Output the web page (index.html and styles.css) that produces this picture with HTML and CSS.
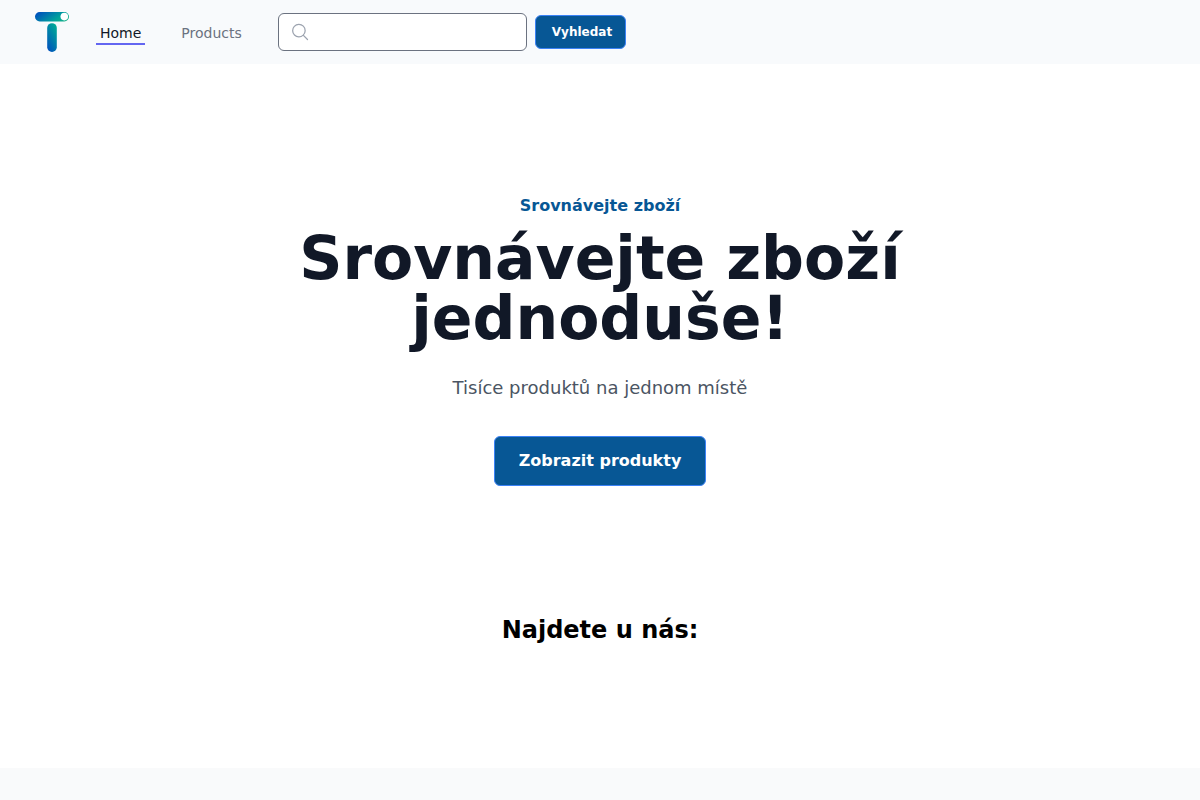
FILE: index.html
```
<!DOCTYPE html>
<html lang="cs">
<head>
<meta charset="utf-8">
<meta name="viewport" content="width=device-width, initial-scale=1">
<title>Srovnávejte zboží</title>
<link rel="stylesheet" href="styles.css">
</head>
<body>

<header class="navbar">
  <a href="#" class="logo" aria-label="Home">
    <svg width="40" height="40" viewBox="0 0 40 40">
      <defs>
        <linearGradient id="bar" x1="0" y1="0.3" x2="1" y2="0.7">
          <stop offset="0" stop-color="#0052bd"/>
          <stop offset="0.7" stop-color="#00a39b"/>
          <stop offset="1" stop-color="#16b08a"/>
        </linearGradient>
        <linearGradient id="stem" x1="0.8" y1="0" x2="0.2" y2="1">
          <stop offset="0" stop-color="#00ab95"/>
          <stop offset="1" stop-color="#0052bd"/>
        </linearGradient>
      </defs>
      <rect x="3" y="0" width="34" height="9.4" rx="4.7" fill="url(#bar)"/>
      <circle cx="32.3" cy="4.6" r="3.8" fill="#fff"/>
      <rect x="15.2" y="11.2" width="9.6" height="28.8" rx="4.8" fill="url(#stem)"/>
    </svg>
  </a>
  <nav class="links">
    <a href="#" class="link active">Home</a>
    <a href="#" class="link">Products</a>
  </nav>
  <form class="search">
    <div class="search-box">
      <svg class="search-icon" width="20" height="20" viewBox="0 0 24 24" fill="none" stroke="#9ca3af" stroke-width="1.5" stroke-linecap="round" stroke-linejoin="round">
        <path d="M21 21l-5.2-5.2m0 0A7.5 7.5 0 1 0 5.2 5.2a7.5 7.5 0 0 0 10.6 10.6z"/>
      </svg>
      <input type="search" name="q" class="search-input" aria-label="Vyhledat">
    </div>
    <button type="submit" class="btn btn-small">Vyhledat</button>
  </form>
</header>

<main>
  <section class="hero">
    <p class="eyebrow">Srovnávejte zboží</p>
    <h1 class="title">Srovnávejte zboží jednoduše!</h1>
    <p class="lead">Tisíce produktů na jednom místě</p>
    <button type="button" class="btn btn-large">Zobrazit produkty</button>
  </section>

  <section class="categories">
    <h2 class="subtitle">Najdete u nás:</h2>
  </section>
</main>

</body>
</html>
```

FILE: styles.css
```
* {
  box-sizing: border-box;
}

body {
  margin: 0;
  background: #f9fafb;
  color: #000;
  font-family: "DejaVu Sans", sans-serif;
  font-size: 16px;
  line-height: 24px;
}

h1, h2, p {
  margin: 0;
}

.navbar {
  display: flex;
  align-items: center;
  height: 64px;
  padding: 0 32px;
  background: #f8fafc;
}

.logo {
  display: flex;
}

.links {
  display: flex;
  gap: 32px;
  margin-left: 24px;
}

.link {
  padding: 4px 4px 0;
  border-bottom: 2px solid transparent;
  color: #6b7280;
  font-size: 14px;
  line-height: 20px;
  text-decoration: none;
}

.active {
  border-color: #6366f1;
  color: #111827;
}

.search {
  display: flex;
  align-items: center;
  gap: 8px;
  margin-left: 32px;
}

.search-box {
  position: relative;
}

.search-icon {
  position: absolute;
  top: 9px;
  left: 12px;
}

.search-input {
  display: block;
  width: 249px;
  height: 38px;
  padding: 8px 12px 8px 40px;
  border: 1px solid #6b7280;
  border-radius: 6px;
  background: #fff;
  font: inherit;
  font-size: 14px;
  appearance: none;
}

.btn {
  border: 1px solid #3b82f6;
  border-radius: 6px;
  background: #075795;
  color: #fff;
  font-family: inherit;
  font-weight: bold;
  cursor: pointer;
}

.btn-small {
  padding: 8px 13px 8px 16px;
  font-size: 12px;
  line-height: 16px;
}

.btn-large {
  margin-top: 32px;
  padding: 12px 24px;
  font-size: 16px;
  line-height: 24px;
}

main {
  background: #fff;
  text-align: center;
}

.hero {
  padding: 128px 24px;
}

.eyebrow {
  color: #075795;
  font-weight: bold;
  line-height: 28px;
}

.title {
  max-width: 672px;
  margin: 8px auto 0;
  color: #111827;
  font-size: 60px;
  line-height: 60px;
}

.lead {
  margin-top: 24px;
  color: #4b5563;
  font-size: 18px;
  line-height: 32px;
}

.categories {
  padding: 0 24px 122px;
}

.subtitle {
  font-size: 24px;
  line-height: 32px;
}
```
